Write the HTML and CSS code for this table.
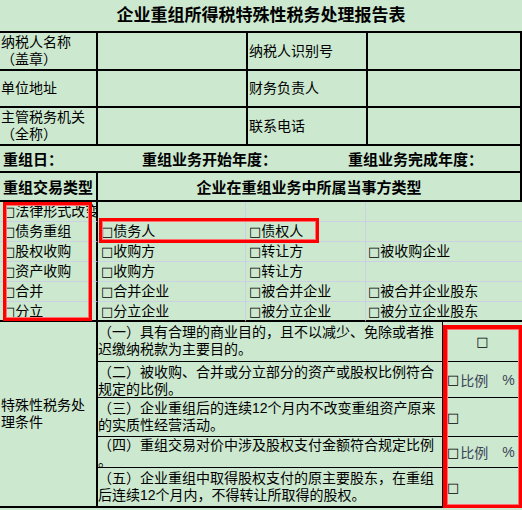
FILE: index.html
```html
<!DOCTYPE html>
<html lang="zh-CN">
<head>
<meta charset="utf-8">
<title>企业重组所得税特殊性税务处理报告表</title>
<link rel="stylesheet" href="styles.css">
</head>
<body>
<div class="sheet">
  <div class="title">企业重组所得税特殊性税务处理报告表</div>

  <div class="info">
    <div class="c two">纳税人名称<br>（盖章）</div>
    <div class="c"></div>
    <div class="c">纳税人识别号</div>
    <div class="c"></div>
    <div class="c">单位地址</div>
    <div class="c"></div>
    <div class="c">财务负责人</div>
    <div class="c"></div>
    <div class="c two">主管税务机关<br>（全称）</div>
    <div class="c"></div>
    <div class="c">联系电话</div>
    <div class="c"></div>
  </div>

  <div class="dates">
    <div>重组日：</div>
    <div>重组业务开始年度：</div>
    <div>重组业务完成年度：</div>
  </div>

  <div class="head">
    <div class="h1">重组交易类型</div>
    <div class="h2">企业在重组业务中所属当事方类型</div>
  </div>

  <div class="types">
    <div class="t k"><span class="cb">□</span>法律形式改变</div><div class="t"></div><div class="t"></div><div class="t"></div>
    <div class="t k"><span class="cb">□</span>债务重组</div><div class="t"><span class="cb">□</span>债务人</div><div class="t"><span class="cb">□</span>债权人</div><div class="t"></div>
    <div class="t k"><span class="cb">□</span>股权收购</div><div class="t"><span class="cb">□</span>收购方</div><div class="t"><span class="cb">□</span>转让方</div><div class="t"><span class="cb">□</span>被收购企业</div>
    <div class="t k"><span class="cb">□</span>资产收购</div><div class="t"><span class="cb">□</span>收购方</div><div class="t"><span class="cb">□</span>转让方</div><div class="t"></div>
    <div class="t k"><span class="cb">□</span>合并</div><div class="t"><span class="cb">□</span>合并企业</div><div class="t"><span class="cb">□</span>被合并企业</div><div class="t"><span class="cb">□</span>被合并企业股东</div>
    <div class="t k last"><span class="cb">□</span>分立</div><div class="t last"><span class="cb">□</span>分立企业</div><div class="t last"><span class="cb">□</span>被分立企业</div><div class="t last"><span class="cb">□</span>被分立企业股东</div>
  </div>

  <div class="cond">
    <div class="label">特殊性税务处<br>理条件</div>
    <div class="txt r1">（一）具有合理的商业目的，且不以减少、免除或者推<br>迟缴纳税款为主要目的。</div>
    <div class="chk center r1"><span class="cb">□</span></div>
    <div class="txt r2">（二）被收购、合并或分立部分的资产或股权比例符合<br>规定的比例。</div>
    <div class="chk r2"><span class="cb">□</span><span class="ratio">比例</span><span class="pct">%</span></div>
    <div class="txt r3">（三）企业重组后的连续12个月内不改变重组资产原来<br>的实质性经营活动。</div>
    <div class="chk r3"><span class="cb">□</span></div>
    <div class="txt r4">（四）重组交易对价中涉及股权支付金额符合规定比例<br>。</div>
    <div class="chk r4"><span class="cb">□</span><span class="ratio">比例</span><span class="pct">%</span></div>
    <div class="txt r5 end">（五）企业重组中取得股权支付的原主要股东，在重组<br>后连续12个月内，不得转让所取得的股权。</div>
    <div class="chk r5 end"><span class="cb">□</span></div>
  </div>

  <div class="mark mark-types"></div>
  <div class="mark mark-debt"></div>
  <div class="mark mark-cond"></div>
</div>
</body>
</html>
```
FILE: styles.css
```css
* { box-sizing: border-box; margin: 0; padding: 0; }
html, body { background: #cce8cf; }
body {
  width: 522px;
  height: 510px;
  overflow: hidden;
  font-family: "Liberation Sans", "Noto Sans CJK SC", sans-serif;
  font-size: 14px;
  color: #000;
}
.sheet { position: relative; width: 522px; }

.cb {
  font-family: "DejaVu Sans", sans-serif;
  font-size: 13px;
}

.title {
  height: 33px;
  border-bottom: 2px solid #000;
  font-size: 17px;
  font-weight: 700;
  text-align: center;
  line-height: 31px;
}

.info {
  display: grid;
  grid-template-columns: 98px 150px 120px 154px;
  grid-template-rows: 38px 37px 38px;
}
.info .c {
  border-right: 2px solid #000;
  border-bottom: 2px solid #000;
  display: flex;
  align-items: center;
  padding-left: 1px;
  line-height: 17px;
  white-space: nowrap;
}

.dates {
  height: 27px;
  border-bottom: 2px solid #000;
  border-right: 2px solid #000;
  display: grid;
  grid-template-columns: 139px 206px 1fr;
  padding-left: 3px;
  align-items: center;
  font-size: 15px;
  font-weight: 700;
  white-space: nowrap;
}

.head {
  height: 29px;
  border-bottom: 2px solid #000;
  border-right: 2px solid #000;
  display: grid;
  grid-template-columns: 98px 1fr;
  font-size: 15px;
  font-weight: 700;
}
.head > div {
  display: flex;
  align-items: center;
  justify-content: center;
  white-space: nowrap;
}
.head .h1 { border-right: 2px solid #000; }

.types {
  display: grid;
  grid-template-columns: 98px 148px 120px 156px;
  grid-template-rows: repeat(6, 20px);
}
.types .t {
  border-bottom: 1px solid #cdcfe2;
  border-right: 1px solid #cdcfe2;
  padding-left: 3px;
  line-height: 19px;
  white-space: nowrap;
  overflow: hidden;
}
.types .t.k { border-right: 2px solid #000; padding-left: 3px; }
.types .t:nth-child(4n) { border-right: none; padding-left: 2px; }
.types .t.last { border-bottom: 2px solid #000; line-height: 18px; }

.cond {
  display: grid;
  grid-template-columns: 98px 345px 79px;
  grid-template-rows: 40px 36px 39px 31px 40px;
}
.cond .label {
  grid-row: 1 / 6;
  border-right: 2px solid #000;
  border-bottom: 2px solid #000;
  display: flex;
  align-items: center;
  padding-left: 1px;
  line-height: 17px;
  white-space: nowrap;
}
.cond .txt {
  border-right: 1px solid #000;
  border-bottom: 1px solid #000;
  padding-top: 2px;
  line-height: 17px;
  white-space: nowrap;
  overflow: hidden;
}
.cond .txt.r4 { padding-top: 0; line-height: 16px; }
.cond .chk {
  border-bottom: 1px solid #000;
  display: flex;
  align-items: center;
  padding-left: 4px;
  white-space: nowrap;
}
.cond .chk.center { justify-content: center; padding-left: 0; }
.cond .end { border-bottom: 2px solid #000; }
.ratio { color: #3b4458; margin-left: 1px; }
.pct { color: #3b4458; margin-left: 14px; }

.mark {
  position: absolute;
  border: 3px solid #ff0000;
  box-shadow: inset 0 0 0 1px #ff7070;
}
.mark-types { left: 3px; top: 202px; width: 89px; height: 119px; }
.mark-debt { left: 99px; top: 218px; width: 220px; height: 25px; }
.mark-cond { left: 443px; top: 325px; width: 79px; height: 183px; border-width: 4px 3px 3px 4px; }
```
